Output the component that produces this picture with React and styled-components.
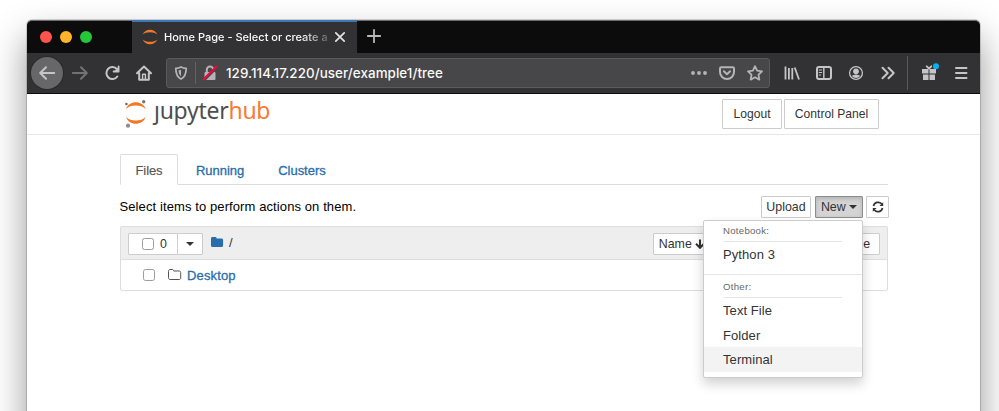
import React from "react";
import styled, { createGlobalStyle, css } from "styled-components";

const Global = createGlobalStyle`
  *, *::before, *::after { box-sizing: border-box; }
  html, body { margin: 0; padding: 0; }
  body { background: #fff; overflow: hidden; font-family: "Liberation Sans", Arial, sans-serif; }
  button { font-family: inherit; margin: 0; }
`;

const Desktop = styled.div`
  width: 999px;
  height: 411px;
  overflow: hidden;
  padding: 20px 19px 0 27px;
  background: #fff;
`;

const Window = styled.div`
  height: 520px;
  border-radius: 5px 5px 0 0;
  background: #fff;
  box-shadow: 0 0 0 1px rgba(0, 0, 0, 0.15), 0 18px 36px rgba(0, 0, 0, 0.42);
`;

const TabStrip = styled.div`
  display: flex;
  height: 33px;
  background: #0c0c0d;
  border-top: 1px solid #6c6c6e;
  border-radius: 5px 5px 0 0;
`;

const Lights = styled.div`
  display: flex;
  align-items: center;
  gap: 8px;
  width: 105px;
  padding-left: 13px;
`;

const Light = styled.span`
  width: 12px;
  height: 12px;
  border-radius: 50%;
  background: ${(p) => p.$color};
`;

const BrowserTab = styled.div`
  display: flex;
  align-items: center;
  width: 225px;
  padding: 0 0 1px 10px;
  background: #323234;
  border-top: 1px solid #0a84ff;
`;

const TabTitle = styled.span`
  width: 165px;
  margin: 0 4px 0 6px;
  white-space: nowrap;
  font: 500 11px/16px Inter, sans-serif;
  color: #f9f9fa;
  mask-image: linear-gradient(to right, #000 138px, transparent 172px);
`;

const NewTab = styled.div`
  display: flex;
  align-items: center;
  padding: 0 0 2px 9px;
`;

const Toolbar = styled.div`
  display: flex;
  align-items: center;
  height: 41px;
  padding: 0 3px 1px 4px;
  background: #323234;
  border-bottom: 1px solid #0c0c0d;
`;

const IconSlot = styled.span`
  display: flex;
  align-items: center;
  justify-content: center;
  flex: none;
  width: 32px;
  height: 32px;
  color: ${(p) => (p.$dim ? "#727274" : "#c5c5c6")};
`;

const BackButton = styled(IconSlot)`
  border-radius: 50%;
  background: #676769;
  box-shadow: 0 0 0 1px #29292b;
  margin-right: 1px;
`;

const UrlBar = styled.div`
  display: flex;
  align-items: center;
  flex: none;
  width: 604px;
  height: 30px;
  margin: 0 6px;
  border: 1px solid #5a5a5c;
  border-radius: 3px;
  background: #474749;
`;

const UrlIcon = styled(IconSlot)`
  width: 28px;
  color: #b4b4b6;
`;

const UrlDivider = styled.span`
  width: 1px;
  height: 22px;
  background: #626267;
`;

const Url = styled.span`
  flex: 1;
  padding-left: 2px;
  font: 500 13.4px/20px Inter, sans-serif;
  letter-spacing: 0.06px;
  color: #f9f9fa;
`;

const ToolbarDivider = styled.span`
  width: 1px;
  height: 34px;
  margin: 0 5px 0 3px;
  background: #5a5a5c;
`;

const Header = styled.header`
  display: flex;
  justify-content: space-between;
  height: 41px;
  padding: 5px 101px 0 97px;
  border-bottom: 1px solid #e7e7e7;
`;

const Brand = styled.div`
  display: flex;
  height: 32px;
  margin-top: -1px;
`;

const Wordmark = styled.span`
  margin: -4px 0 0 7px;
  font: 400 23px/32px "Noto Sans", sans-serif;
  letter-spacing: -0.27px;
  color: #4e4e4e;
`;

const Hub = styled.span`
  color: #f97a30;
`;

const HeaderButtons = styled.div`
  display: flex;
  gap: 2px;
`;

const Button = styled.button`
  display: flex;
  align-items: center;
  justify-content: center;
  flex: none;
  width: ${(p) => p.$w}px;
  height: ${(p) => (p.$tall ? 30 : 22)}px;
  padding: 0 0 0 ${(p) => p.$inset || 0}px;
  border: 1px solid #ccc;
  border-radius: 1px;
  background: #fff;
  color: #333;
  font-size: ${(p) => (p.$tall ? 12.1 : 12.4)}px;
  line-height: 18px;
  white-space: nowrap;
  ${(p) =>
    p.$active &&
    css`
      border-color: #8c8c8c;
      background: #d4d4d4;
      box-shadow: inset 0 2px 4px rgba(0, 0, 0, 0.15);
    `}
`;

const Main = styled.main`
  width: 768px;
  margin: 19px 0 0 93px;
`;

const Tabs = styled.nav`
  display: flex;
  height: 31px;
  border-bottom: 1px solid #ddd;
`;

const Tab = styled.a`
  height: 31px;
  padding: 0 15px;
  margin-right: 2px;
  border: 1px solid transparent;
  border-radius: 2px 2px 0 0;
  font-size: 13px;
  line-height: 31px;
  letter-spacing: -0.03px;
  color: #296eaa;
  -webkit-text-stroke: 0.3px #296eaa;
  ${(p) =>
    p.$active &&
    css`
      width: 58px;
      padding: 0 14.5px;
      letter-spacing: -0.1px;
      border-color: #ddd #ddd #fff;
      background: #fff;
      color: #555;
      -webkit-text-stroke: 0.15px #555;
    `}
`;

const Actions = styled.div`
  display: flex;
  align-items: center;
  height: 22px;
  margin: 11px -1px 0 -0.5px;
`;

const Hint = styled.span`
  flex: 1;
  padding-bottom: 2px;
  font-size: 13px;
  letter-spacing: 0.1px;
  color: #000;
`;

const ActionButtons = styled.div`
  display: flex;
  gap: 3px;
`;

const Dropdown = styled.div`
  position: relative;
  margin-left: 1px;
`;

const Menu = styled.div`
  position: absolute;
  z-index: 2;
  top: 24px;
  right: 0;
  width: 160px;
  height: 158px;
  padding-top: 3px;
  border: 1px solid #ccc;
  border-radius: 2px;
  background: #fff;
  box-shadow: 0 6px 12px rgba(0, 0, 0, 0.18);
`;

const MenuHeading = styled.div`
  width: 119px;
  height: 18px;
  margin-left: 19px;
  border-bottom: 1px solid #e5e5e5;
  font-size: 9.6px;
  line-height: 14px;
  letter-spacing: 0.28px;
  color: #666;
`;

const MenuItem = styled.div`
  height: 25px;
  padding-left: 19px;
  font-size: 13px;
  line-height: 26.4px;
  letter-spacing: 0.08px;
  color: #333;
  background: ${(p) => (p.$hover ? "#f3f3f3" : "#fff")};
  & + & { margin-top: -0.3px; }
`;

const MenuDivider = styled.div`
  height: 1px;
  margin: 7px 0 5px;
  background: #e5e5e5;
`;

const FileList = styled.section`
  height: 65px;
  margin-top: 8px;
  border: 1px solid #ddd;
  border-radius: 2px;
`;

const ListHeader = styled.div`
  display: flex;
  align-items: center;
  height: 33px;
  padding: 2px 7px 0;
  border-bottom: 1px solid #ddd;
  background: #eee;
`;

const ButtonGroup = styled.div`
  display: flex;
  button + button { margin-left: -1px; }
`;

const Checkbox = styled.span`
  width: 12px;
  height: 12px;
  border: 1px solid #9d9d9d;
  border-radius: 2.5px;
  background: #fff;
`;

const Count = styled.span`
  margin-left: 6px;
`;

const Crumb = styled.span`
  display: flex;
  flex: 1;
  gap: 5px;
  padding: 0 0 3px 8px;
  font-size: 13px;
  line-height: 16px;
  color: #333;
`;

const SortButtons = styled.div`
  display: flex;
  justify-content: space-between;
  width: 227px;
`;

const Row = styled.div`
  display: flex;
  align-items: center;
  height: 30px;
  padding-left: 22px;
`;

const FolderIcon = styled.span`
  display: flex;
  margin: 0 5px 1px 13px;
`;

const FileName = styled.a`
  font-size: 13px;
  letter-spacing: 0.15px;
  color: #296eaa;
  -webkit-text-stroke: 0.3px #296eaa;
`;

const Icon = ({ s = 16, h, children, ...rest }) => (
  <svg width={s} height={h || s} viewBox={`0 0 ${s} ${h || s}`} fill="none" stroke="currentColor" strokeWidth="2" strokeLinecap="round" strokeLinejoin="round" {...rest}>
    {children}
  </svg>
);

const Caret = () => (
  <Icon s={8} h={4} stroke="none"><path d="M0 0h8L4 4z" fill="#333" /></Icon>
);

const TabLogo = () => (
  <Icon s={16} stroke="none" fill="#f37726">
    <path d="M.6 5.600C2 2.500 4.700.8 8 .8s6 1.700 7.400 4.800C13.600 4 11 3.200 8 3.200S2.400 4 .6 5.600z" />
    <path d="M.6 10.400C2 13.500 4.700 15.200 8 15.200s6-1.700 7.400-4.800C13.600 12 11 12.800 8 12.800S2.400 12 .6 10.400z" />
  </Icon>
);

const JupyterMark = () => (
  <Icon s={23} h={30} stroke="none">
    <path d="M2 11C3.700 6.500 7.400 4.300 11.800 4.300S20 6.500 21.700 11C19.400 8.500 15.900 7.500 11.800 7.500S4.300 8.500 2 11z" fill="#f37726" />
    <path d="M2 19C3.700 23.500 7.400 25.800 11.800 25.800S20 23.500 21.700 19C19.400 21.500 15.900 22.500 11.800 22.500S4.300 21.500 2 19z" fill="#f37726" />
    <circle cx="2.400" cy="6" r="1.300" fill="#6b6b6b" />
    <circle cx="19.700" cy="3.800" r="1.700" fill="#767677" />
    <circle cx="4" cy="27.700" r="2.100" fill="#8d8d8e" />
  </Icon>
);

export default function App() {
  return (
    <Desktop>
      <Global />
      <Window>
        <TabStrip>
          <Lights>
            <Light $color="#ff544d" />
            <Light $color="#ffb429" />
            <Light $color="#25c63a" />
          </Lights>
          <BrowserTab>
            <TabLogo />
            <TabTitle>Home Page - Select or create a</TabTitle>
            <Icon s={14} stroke="#e4e4e5" strokeWidth="1.700"><path d="M2.800 2.800l8.400 8.400M11.200 2.800l-8.400 8.400" /></Icon>
          </BrowserTab>
          <NewTab>
            <Icon s={16} stroke="#b8b8b9" strokeWidth="1.800"><path d="M8 1.800v12.400M1.800 8h12.400" /></Icon>
          </NewTab>
        </TabStrip>

        <Toolbar>
          <BackButton>
            <Icon s={18}><path d="M16.200 9H2.500M8 3.200L2.200 9 8 14.800" /></Icon>
          </BackButton>
          <IconSlot $dim>
            <Icon s={18}><path d="M1.800 9h13.700M10 3.200L15.800 9 10 14.800" /></Icon>
          </IconSlot>
          <IconSlot>
            <Icon><path d="M13.300 11.500A6 6 0 1 1 13 4.200" /><path d="M14.600 1.500v5h-5" strokeWidth="1.800" /><path d="M10.500 6.200l3.800-3.500v3.500z" fill="currentColor" strokeWidth="1" /></Icon>
          </IconSlot>
          <IconSlot>
            <Icon><path d="M1 8.300L8 1.500l7 6.800M3.200 8v6.800h9.600V8" /><path d="M6.600 14.500V9.200h2.800v5.300" strokeWidth="1.500" /></Icon>
          </IconSlot>
          <UrlBar>
            <UrlIcon>
              <Icon s={14}><path d="M7 1C5.300 2 3.600 2.300 1.800 2.300c0 5 .9 8.700 5.200 10.700 4.300-2 5.200-5.700 5.200-10.700C10.400 2.300 8.700 2 7 1z" strokeWidth="1.800" /><path d="M7 3.800c-.9.500-1.700.700-2.500.8.200 2.500.8 4.300 2.500 5.600z" fill="currentColor" stroke="none" /></Icon>
            </UrlIcon>
            <UrlDivider />
            <UrlIcon>
              <Icon s={16}><path d="M4.800 7V4.800a3.200 3.200 0 0 1 6.400 0V7" /><rect x="2.500" y="7" width="11" height="8" rx="1" fill="currentColor" stroke="none" /><path d="M2.500 14.500L14.500 2.500" stroke="#474749" strokeWidth="3" strokeLinecap="butt" /><path d="M1.600 14.400L14.300 1.700" stroke="#ff0039" /></Icon>
            </UrlIcon>
            <Url>129.114.17.220/user/example1/tree</Url>
            <UrlIcon><Icon fill="currentColor" stroke="none"><circle cx="2" cy="8" r="1.900" /><circle cx="8" cy="8" r="1.900" /><circle cx="14" cy="8" r="1.900" /></Icon></UrlIcon>
            <UrlIcon><Icon><path d="M2.200 2.200h11.600c.7 0 1.200.5 1.200 1.200v3.700a7 7 0 0 1-14 0V3.400c0-.7.500-1.200 1.200-1.200z" /><path d="M4.900 6.300L8 9.300l3.100-3" /></Icon></UrlIcon>
            <UrlIcon><Icon><path d="M8 1.200l2.100 4.400 4.900.7-3.500 3.400.8 4.900L8 12.300l-4.300 2.300.8-4.900L1 6.300l4.900-.7z" strokeWidth="1.800" /></Icon></UrlIcon>
          </UrlBar>
          <IconSlot><Icon><path d="M1.500 1.500v13M4.900 3v11.500M8.300 3v11.500M10.700 2.500l4.300 12" strokeWidth="1.800" strokeLinecap="butt" /></Icon></IconSlot>
          <IconSlot><Icon><rect x="1" y="2" width="14" height="12" rx="2" /><path d="M7.800 2v12" strokeWidth="1.500" /><path d="M3.200 5h2.500M3.200 7.500h2.500M3.200 10h1.500" strokeWidth="1" /></Icon></IconSlot>
          <IconSlot><Icon><circle cx="8" cy="8" r="6.400" strokeWidth="1.300" /><circle cx="8" cy="6.300" r="2.900" fill="currentColor" stroke="none" /><path d="M3.700 10.800c1.200-.4 2.300-1.400 4.300-1.400s3.100 1 4.300 1.400a5.200 5.200 0 0 1-8.600 0z" fill="currentColor" stroke="none" /></Icon></IconSlot>
          <IconSlot><Icon><path d="M2.500 2.800L7.700 8l-5.200 5.200M8.500 2.800L13.700 8l-5.200 5.200" /></Icon></IconSlot>
          <ToolbarDivider />
          <IconSlot>
            <Icon s={20}>
              <path d="M3 6h6.500v4.500H3zM10.500 6H17v4.500h-6.500zM4 11.500h5.500V17H4zM10.500 11.500H16V17h-5.500z" fill="currentColor" stroke="none" />
              <path d="M10 5.500L7.700 3.300M10 5.500l2.300-2.200" strokeWidth="1.800" />
              <circle cx="17" cy="3.200" r="3" fill="#00b3f4" stroke="none" />
            </Icon>
          </IconSlot>
          <IconSlot><Icon><path d="M3 3h10.500M3 8h10.500M3 13h10.500" /></Icon></IconSlot>
        </Toolbar>

        <Header>
          <Brand>
            <JupyterMark />
            <Wordmark>ȷupyter<Hub>hub</Hub></Wordmark>
          </Brand>
          <HeaderButtons>
            <Button $w={60} $tall>Logout</Button>
            <Button $w={95} $tall>Control Panel</Button>
          </HeaderButtons>
        </Header>

        <Main>
          <Tabs>
            <Tab $active>Files</Tab>
            <Tab>Running</Tab>
            <Tab>Clusters</Tab>
          </Tabs>
          <Actions>
            <Hint>Select items to perform actions on them.</Hint>
            <ActionButtons>
              <Button $w={50}>Upload</Button>
              <Dropdown>
                <Button $w={48} $active>New&nbsp;<Caret /></Button>
                <Menu>
                  <MenuHeading>Notebook:</MenuHeading>
                  <MenuItem>Python 3</MenuItem>
                  <MenuDivider />
                  <MenuHeading>Other:</MenuHeading>
                  <MenuItem>Text File</MenuItem>
                  <MenuItem>Folder</MenuItem>
                  <MenuItem $hover>Terminal</MenuItem>
                </Menu>
              </Dropdown>
              <Button $w={23}>
                <Icon s={12} strokeWidth="1.700" strokeLinecap="butt"><path d="M1.500 5A4.700 4.700 0 0 1 9.700 3M10.500 7A4.700 4.700 0 0 1 2.300 9" /><path d="M11.200 1.200v3.800H7.400zM.8 10.800V7h3.800z" fill="currentColor" stroke="none" /></Icon>
              </Button>
            </ActionButtons>
          </Actions>
          <FileList>
            <ListHeader>
              <ButtonGroup>
                <Button $w={50} $inset={3}><Checkbox /><Count>0</Count></Button>
                <Button $w={26}><Caret /></Button>
              </ButtonGroup>
              <Crumb>
                <Icon s={13} h={14} stroke="none"><path d="M0 3.500C0 2.600.6 2 1.500 2h2.700c.9 0 1.500.6 1.500 1.500h4.900c.9 0 1.500.6 1.500 1.500v5.500c0 .9-.6 1.500-1.500 1.500H1.500C.6 12 0 11.400 0 10.500z" fill="#296eaa" /></Icon>
                /
              </Crumb>
              <SortButtons>
                <Button $w={58}>Name&nbsp;<Icon s={10} h={11} stroke="#333" strokeLinecap="butt" strokeLinejoin="miter"><path d="M5 .5v8M1 4.800l4 4 4-4" /></Icon></Button>
                <Button $w={65}>File size</Button>
              </SortButtons>
            </ListHeader>
            <Row>
              <Checkbox />
              <FolderIcon>
                <Icon s={14} h={13} stroke="#555" strokeWidth="1"><path d="M.5 3c0-.9.600-1.500 1.500-1.500h2.200c.9 0 1.500.6 1.500 1.500h5.500c.9 0 1.500.6 1.500 1.500v5.500c0 .9-.6 1.500-1.500 1.500H2C1.100 11.500.5 10.900.5 10z" /></Icon>
              </FolderIcon>
              <FileName>Desktop</FileName>
            </Row>
          </FileList>
        </Main>
      </Window>
    </Desktop>
  );
}
